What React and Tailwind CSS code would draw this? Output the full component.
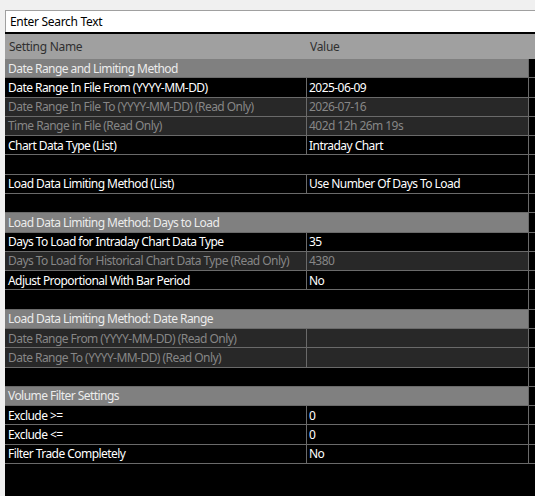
import React from "react";

const rows = [
  { t: "section", a: "Date Range and Limiting Method" },
  { t: "normal", a: "Date Range In File From (YYYY-MM-DD)", b: "2025-06-09" },
  { t: "ro", a: "Date Range In File To (YYYY-MM-DD) (Read Only)", b: "2026-07-16" },
  { t: "ro", a: "Time Range in File (Read Only)", b: "402d 12h 26m 19s" },
  { t: "normal", a: "Chart Data Type (List)", b: "Intraday Chart" },
  { t: "empty" },
  { t: "normal", a: "Load Data Limiting Method (List)", b: "Use Number Of Days To Load" },
  { t: "empty" },
  { t: "section", a: "Load Data Limiting Method: Days to Load" },
  { t: "normal", a: "Days To Load for Intraday Chart Data Type", b: "35" },
  { t: "ro", a: "Days To Load for Historical Chart Data Type (Read Only)", b: "4380" },
  { t: "normal", a: "Adjust Proportional With Bar Period", b: "No" },
  { t: "empty" },
  { t: "section", a: "Load Data Limiting Method: Date Range" },
  { t: "ro", a: "Date Range From (YYYY-MM-DD) (Read Only)", b: "" },
  { t: "ro", a: "Date Range To (YYYY-MM-DD) (Read Only)", b: "" },
  { t: "empty" },
  { t: "section", a: "Volume Filter Settings" },
  { t: "normal", a: "Exclude >=", b: "0" },
  { t: "normal", a: "Exclude <=", b: "0" },
  { t: "normal", a: "Filter Trade Completely", b: "No" },
];

function Row({ r }) {
  const base = "flex h-[19.29px] border-b border-[#6a6a6a] shrink-0";
  if (r.t === "section") {
    return (
      <div className={base}>
        <div className="w-[524px] bg-[#808080] border-r border-[#6a6a6a] text-[#ececec] pl-[3px] pt-[1px] flex items-center whitespace-nowrap overflow-hidden">
          {r.a}
        </div>
      </div>
    );
  }
  if (r.t === "empty") {
    return (
      <div className={base}>
        <div className="w-[524px] border-r border-[#6a6a6a]" />
      </div>
    );
  }
  const ro = r.t === "ro";
  const cell = ro ? "bg-[#282828] text-[#868686]" : "bg-black text-white";
  return (
    <div className={base}>
      <div className={`w-[302px] border-r border-[#6a6a6a] pl-[3px] pt-[1px] flex items-center whitespace-nowrap overflow-hidden ${cell}`}>
        {r.a}
      </div>
      <div className={`w-[222px] border-r border-[#6a6a6a] pl-[2px] pt-[1px] flex items-center whitespace-nowrap overflow-hidden ${cell}`}>
        {r.b}
      </div>
    </div>
  );
}

export default function App() {
  return (
    <div className="w-[535px] h-[496px] bg-[#f0f0f0] pl-[5px] pt-[10px] overflow-hidden font-['Segoe_UI','Noto_Sans',sans-serif] text-[12px] tracking-[-0.55px] leading-none">
      <div className="h-[22px] bg-white border-t border-l border-[#a0a0a0] flex items-center pl-[4px] text-black tracking-[-0.3px]">
        Enter Search Text
      </div>
      <div className="bg-black h-[464px] pt-[2px] flex flex-col">
        <div className="h-[25px] bg-[#a0a0a0] flex items-center text-[#303030] tracking-[-0.3px] shrink-0">
          <div className="w-[302px] pl-[4px]">Setting Name</div>
          <div className="pl-[3px]">Value</div>
        </div>
        {rows.map((r, i) => (
          <Row key={i} r={r} />
        ))}
      </div>
    </div>
  );
}
